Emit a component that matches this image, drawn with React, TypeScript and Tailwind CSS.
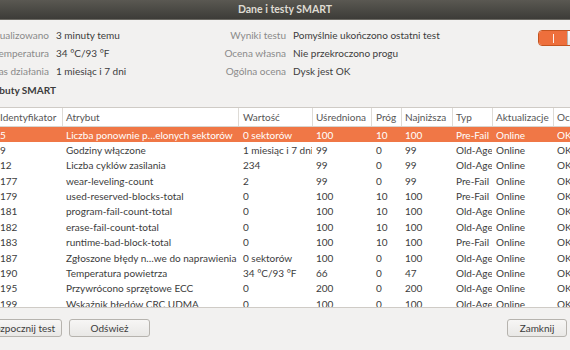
import React from 'react';

interface Attr {
  id:      string;
  name:    string;
  value:   string;
  norm:    string;
  thresh:  string;
  worst:   string;
  type:    string;
  updates: string;
  status:  string;
}

const rows: Attr[] = [
  { id: '5',   name: 'Liczba ponownie p…elonych sektorów', value: '0 sektorów',       norm: '100', thresh: '10', worst: '100', type: 'Pre-Fail', updates: 'Online', status: 'OK' },
  { id: '9',   name: 'Godziny włączone',                   value: '1 miesiąc i 7 dni', norm: '99',  thresh: '0',  worst: '99',  type: 'Old-Age',  updates: 'Online', status: 'OK' },
  { id: '12',  name: 'Liczba cyklów zasilania',            value: '234',               norm: '99',  thresh: '0',  worst: '99',  type: 'Old-Age',  updates: 'Online', status: 'OK' },
  { id: '177', name: 'wear-leveling-count',                value: '2',                 norm: '99',  thresh: '0',  worst: '99',  type: 'Pre-Fail', updates: 'Online', status: 'OK' },
  { id: '179', name: 'used-reserved-blocks-total',         value: '0',                 norm: '100', thresh: '10', worst: '100', type: 'Pre-Fail', updates: 'Online', status: 'OK' },
  { id: '181', name: 'program-fail-count-total',           value: '0',                 norm: '100', thresh: '10', worst: '100', type: 'Old-Age',  updates: 'Online', status: 'OK' },
  { id: '182', name: 'erase-fail-count-total',             value: '0',                 norm: '100', thresh: '10', worst: '100', type: 'Old-Age',  updates: 'Online', status: 'OK' },
  { id: '183', name: 'runtime-bad-block-total',            value: '0',                 norm: '100', thresh: '10', worst: '100', type: 'Pre-Fail', updates: 'Online', status: 'OK' },
  { id: '187', name: 'Zgłoszone błędy n…we do naprawienia', value: '0 sektorów',      norm: '100', thresh: '0',  worst: '100', type: 'Old-Age',  updates: 'Online', status: 'OK' },
  { id: '190', name: 'Temperatura powietrza',              value: '34 °C/93 °F',       norm: '66',  thresh: '0',  worst: '47',  type: 'Old-Age',  updates: 'Online', status: 'OK' },
  { id: '195', name: 'Przywrócono sprzętowe ECC',          value: '0',                 norm: '200', thresh: '0',  worst: '200', type: 'Old-Age',  updates: 'Online', status: 'OK' },
  { id: '199', name: 'Wskaźnik błędów CRC UDMA',           value: '0',                 norm: '100', thresh: '0',  worst: '100', type: 'Old-Age',  updates: 'Online', status: 'OK' },
];

// szerokości kolumn w px
const cols = [
  { key: 'id',      label: 'Identyfikator', w: 'w-[62px] pl-0' },
  { key: 'name',    label: 'Atrybut',       w: 'w-[176px] pl-[3px]' },
  { key: 'value',   label: 'Wartość',       w: 'w-[74px] pl-[4px]' },
  { key: 'norm',    label: 'Uśredniona',    w: 'w-[59px] pl-[3px]' },
  { key: 'thresh',  label: 'Próg',          w: 'w-[30px] pl-[4px]' },
  { key: 'worst',   label: 'Najniższa',     w: 'w-[51px] pl-[3px]' },
  { key: 'type',    label: 'Typ',           w: 'w-[40px] pl-[3px]' },
  { key: 'updates', label: 'Aktualizacje',  w: 'w-[61px] pl-[3px]' },
  { key: 'status',  label: 'Ocena',         w: 'w-[60px] pl-[3px]' },
] as const;

const Button = ({ label, className }: { label: string; className: string }) => (
  <button
    className={`h-[18px] shrink-0 rounded-[3px] border border-[#b6b3ae] bg-gradient-to-b from-[#f7f6f5] to-[#e9e8e6] text-[#3c3c3c] flex items-center justify-center ${className}`}
  >
    {label}
  </button>
);

export default function App() {
  return (
    <div className="w-[570px] h-[350px] overflow-hidden bg-[#f2f1f0] text-[10px] text-[#3c3c3c] font-['Lato','Open_Sans',sans-serif] leading-none">
      {/* Pasek tytułu */}
      <div className="h-[20px] border-b border-[#6b6963] bg-gradient-to-b from-[#5a5852] to-[#3d3c38] flex items-center justify-center">
        <span className="text-[#dfdbd2] font-bold text-[10.5px]">Dane i testy SMART</span>
      </div>

      {/* Informacje */}
      <div className="-ml-[40px] pt-[6px] flex">
        <div className="w-[89px] shrink-0 flex flex-col items-end text-[#8a8a8a]">
          <div className="h-[18px] flex items-center">Zaktualizowano</div>
          <div className="h-[18px] flex items-center">Temperatura</div>
          <div className="h-[18px] flex items-center">Czas działania</div>
        </div>
        <div className="w-[130px] ml-[7px] shrink-0 flex flex-col">
          <div className="h-[18px] flex items-center">3 minuty temu</div>
          <div className="h-[18px] flex items-center">34 °C/93 °F</div>
          <div className="h-[18px] flex items-center">1 miesiąc i 7 dni</div>
        </div>
        <div className="w-[100px] shrink-0 flex flex-col items-end text-[#8a8a8a]">
          <div className="h-[18px] flex items-center">Wyniki testu</div>
          <div className="h-[18px] flex items-center">Ocena własna</div>
          <div className="h-[18px] flex items-center">Ogólna ocena</div>
        </div>
        <div className="w-[200px] ml-[7px] shrink-0 flex flex-col">
          <div className="h-[18px] flex items-center">Pomyślnie ukończono ostatni test</div>
          <div className="h-[18px] flex items-center">Nie przekroczono progu</div>
          <div className="h-[18px] flex items-center">Dysk jest OK</div>
        </div>
        {/* Przełącznik */}
        <div className="ml-[45px] mt-[4px] shrink-0 h-[16px] w-[56px] flex rounded-[4px] border border-[#c4541f] overflow-hidden">
          <div className="w-[28px] bg-[#ee6f3c] flex items-center justify-center">
            <div className="w-px h-[9px] bg-white/90" />
          </div>
          <div className="flex-1 bg-gradient-to-b from-[#fdfdfd] to-[#eceae8] border-l border-[#b8b5b0]" />
        </div>
      </div>

      <div className="-ml-[40px] pl-[20px] mt-[1px] h-[18px] flex items-center font-bold">Atrybuty SMART</div>

      {/* Tabela */}
      <div className="mt-[8px] h-[201px] border-y border-[#cfcbc6] bg-white overflow-hidden">
        <div className="h-[19px] flex border-b border-[#d8d5d0] text-[#555]">
          {cols.map((c, i) => (
            <div
              key={c.key}
              className={`${c.w} shrink-0 flex items-center whitespace-nowrap ${i > 0 ? 'border-l border-[#dedbd6]' : ''}`}
            >
              {c.label}
            </div>
          ))}
        </div>
        {rows.map((r, ri) => (
          <div
            key={r.id}
            className={`h-[15.36px] flex ${ri === 0 ? 'bg-[#f07746] text-white' : ''}`}
          >
            {cols.map((c, i) => (
              <div
                key={c.key}
                className={`${c.w} shrink-0 flex items-center whitespace-nowrap overflow-hidden ${i > 0 ? 'border-l border-transparent' : ''}`}
              >
                {r[c.key]}
              </div>
            ))}
          </div>
        ))}
      </div>

      {/* Przyciski */}
      <div className="mt-[11px] flex">
        <Button label="Rozpocznij test" className="-ml-[18px] w-[80px]" />
        <Button label="Odśwież" className="ml-[7px] w-[81px]" />
        <Button label="Zamknij" className="ml-auto mr-[3px] w-[60px]" />
      </div>
    </div>
  );
}
